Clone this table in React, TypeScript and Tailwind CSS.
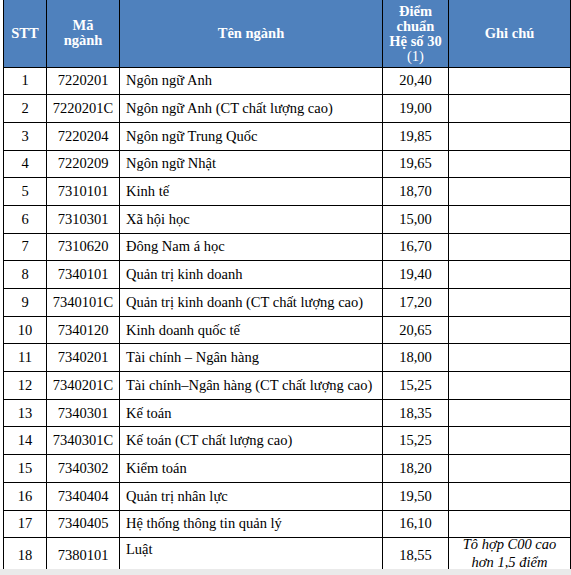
import React from "react";

const rows: [string, string, string, string][] = [
  ["1", "7220201", "Ngôn ngữ Anh", "20,40"],
  ["2", "7220201C", "Ngôn ngữ Anh (CT chất lượng cao)", "19,00"],
  ["3", "7220204", "Ngôn ngữ Trung Quốc", "19,85"],
  ["4", "7220209", "Ngôn ngữ Nhật", "19,65"],
  ["5", "7310101", "Kinh tế", "18,70"],
  ["6", "7310301", "Xã hội học", "15,00"],
  ["7", "7310620", "Đông Nam á học", "16,70"],
  ["8", "7340101", "Quản trị kinh doanh", "19,40"],
  ["9", "7340101C", "Quản trị kinh doanh (CT chất lượng cao)", "17,20"],
  ["10", "7340120", "Kinh doanh quốc tế", "20,65"],
  ["11", "7340201", "Tài chính – Ngân hàng", "18,00"],
  ["12", "7340201C", "Tài chính–Ngân hàng (CT chất lượng cao)", "15,25"],
  ["13", "7340301", "Kế toán", "18,35"],
  ["14", "7340301C", "Kế toán (CT chất lượng cao)", "15,25"],
  ["15", "7340302", "Kiểm toán", "18,20"],
  ["16", "7340404", "Quản trị nhân lực", "19,50"],
  ["17", "7340405", "Hệ thống thông tin quản lý", "16,10"],
];

export default function App() {
  return (
    <div
      className="w-[571px] h-[575px] bg-white flex flex-col overflow-hidden text-black"
      style={{ fontFamily: '"Liberation Serif", "Times New Roman", serif' }}
    >
      <div className="h-[569px] overflow-hidden pl-[3px]">
        <table className="table-fixed border-collapse w-[567px] text-[14.5px] leading-[17px]">
          <colgroup>
            <col className="w-[43px]" />
            <col className="w-[73px]" />
            <col className="w-[263px]" />
            <col className="w-[66px]" />
            <col className="w-[122px]" />
          </colgroup>
          <thead>
            <tr className="h-[67px] bg-[#4f81bd] text-white font-bold leading-[15px]">
              <th className="border border-black border-t-0 text-center align-middle">STT</th>
              <th className="border border-black border-t-0 text-center align-middle">
                Mã
                <br />
                ngành
              </th>
              <th className="border border-black border-t-0 text-center align-middle">Tên ngành</th>
              <th className="border border-black border-t-0 text-center align-middle pt-[2px] leading-[15px]">
                Điểm
                <br />
                chuẩn
                <br />
                Hệ số 30
                <br />
                <span className="font-normal">(1)</span>
              </th>
              <th className="border border-black border-t-0 text-center align-middle">Ghi chú</th>
            </tr>
          </thead>
          <tbody>
            {rows.map((r) => (
              <tr key={r[0]} className="h-[27.7px]">
                <td className="border border-black text-center align-middle">{r[0]}</td>
                <td className="border border-black text-center align-middle">{r[1]}</td>
                <td className="border border-black text-left align-middle pl-[6px] whitespace-nowrap">{r[2]}</td>
                <td className="border border-black text-center align-middle">{r[3]}</td>
                <td className="border border-black"></td>
              </tr>
            ))}
            <tr className="h-[36px]">
              <td className="border border-black text-center align-middle">18</td>
              <td className="border border-black text-center align-middle">7380101</td>
              <td className="border border-black text-left align-top pl-[6px] pt-[3px]">Luật</td>
              <td className="border border-black text-center align-middle">18,55</td>
              <td className="border border-black text-center align-top p-0">
                <div className="italic leading-[18px] -mt-[3px]">
                  Tô hợp C00 cao
                  <br />
                  hơn 1,5 điểm
                </div>
              </td>
            </tr>
          </tbody>
        </table>
      </div>
      <div className="flex-1 bg-[#eaeaea]"></div>
    </div>
  );
}
